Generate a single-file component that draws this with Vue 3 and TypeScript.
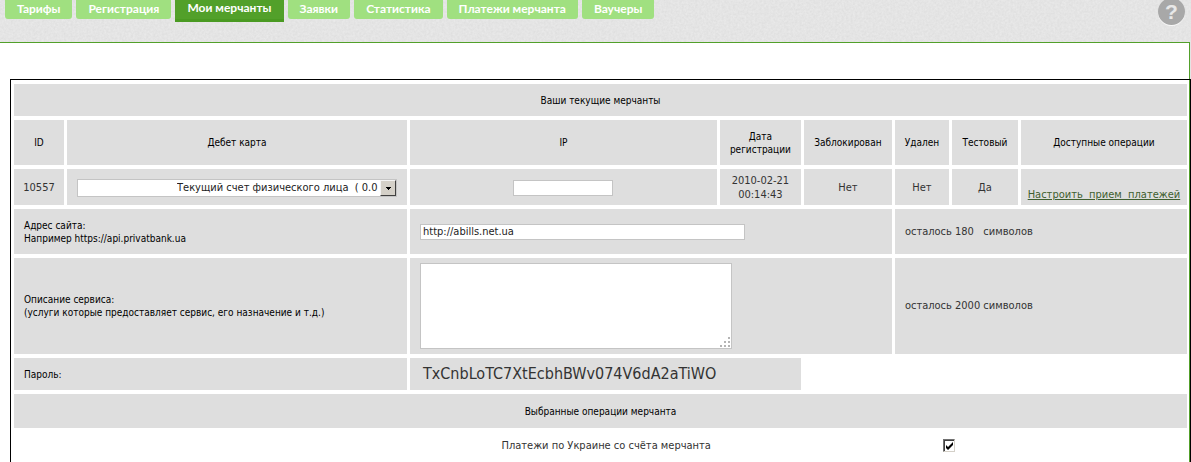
<script setup lang="ts">
import { ref } from 'vue'

interface Tab {
  label: string
  active?: boolean
}

const tabs: Tab[] = [
  { label: 'Тарифы' },
  { label: 'Регистрация' },
  { label: 'Мои мерчанты', active: true },
  { label: 'Заявки' },
  { label: 'Статистика' },
  { label: 'Платежи мерчанта' },
  { label: 'Ваучеры' },
]

const columns = ['ID', 'Дебет карта', 'IP', 'Дата регистрации', 'Заблокирован', 'Удален', 'Тестовый', 'Доступные операции']

const ip = ref('')
const site = ref('http://abills.net.ua')
const description = ref('')
const ukrainePayments = ref(true)
</script>

<template>
  <div class="page">
    <header class="top">
      <svg class="paper" aria-hidden="true">
        <filter id="grain" x="0" y="0" width="100%" height="100%" color-interpolation-filters="sRGB">
          <feTurbulence type="fractalNoise" baseFrequency="0.45" numOctaves="3" seed="4" />
          <feColorMatrix values="0.06 0 0 0 0.865  0.06 0 0 0 0.865  0.06 0 0 0 0.865  0 0 0 0 1" />
        </filter>
        <rect width="100%" height="100%" filter="url(#grain)" />
      </svg>
      <nav class="tabs">
        <a v-for="tab in tabs" :key="tab.label" href="#" class="tab" :class="{ active: tab.active }">{{ tab.label }}</a>
      </nav>
      <button type="button" class="help">?</button>
    </header>

    <main class="panel">
      <table class="merchants">
        <colgroup>
          <col class="c-id" />
          <col class="c-card" />
          <col class="c-ip" />
          <col class="c-date" />
          <col class="c-blocked" />
          <col class="c-deleted" />
          <col class="c-test" />
          <col class="c-ops" />
        </colgroup>
        <tbody>
          <tr class="row-title">
            <th colspan="8">Ваши текущие мерчанты</th>
          </tr>
          <tr class="row-head">
            <th v-for="name in columns" :key="name" scope="col">{{ name }}</th>
          </tr>
          <tr class="row-data">
            <td>10557</td>
            <td class="left">
              <div class="select-box">
                <select aria-label="Дебет карта">
                  <option>Текущий счет физического лица&nbsp; ( 0.0&nbsp; UAH )</option>
                </select>
                <span class="arrow" aria-hidden="true">
                  <svg width="5" height="3" viewBox="0 0 5 3"><path d="M0 0h5v1h-1v1h-1v1h-1v-1h-1v-1h-1z" fill="#000" /></svg>
                </span>
              </div>
            </td>
            <td><input v-model="ip" class="ip" type="text" aria-label="IP" /></td>
            <td>2010-02-21 00:14:43</td>
            <td>Нет</td>
            <td>Нет</td>
            <td>Да</td>
            <td class="ops"><a href="#">Настроить&nbsp; прием&nbsp; платежей</a></td>
          </tr>
          <tr class="row-site">
            <th colspan="2" class="left"><label for="site">Адрес сайта:<br />Например https://api.privatbank.ua</label></th>
            <td colspan="3" class="left"><input id="site" v-model="site" class="site" type="text" /></td>
            <td colspan="3" class="left">осталось 180 &nbsp; символов</td>
          </tr>
          <tr class="row-desc">
            <th colspan="2" class="left">
              <label for="desc">Описание сервиса:<br />(услуги которые предоставляет сервис, его назначение и т.д.)</label>
            </th>
            <td colspan="3" class="left">
              <div class="area-box">
                <textarea id="desc" v-model="description"></textarea>
                <svg class="grip" width="11" height="11" viewBox="0 0 11 11" fill="#b4b4b4" aria-hidden="true">
                  <path d="M9 0h2v2h-2zM9 4h2v2h-2zM5 4h2v2h-2zM9 8h2v2h-2zM5 8h2v2h-2zM1 8h2v2h-2z" />
                </svg>
              </div>
            </td>
            <td colspan="3" class="left">осталось 2000 символов</td>
          </tr>
          <tr class="row-pass">
            <th colspan="2" class="left">Пароль:</th>
            <td colspan="2" class="left password">TxCnbLoTC7XtEcbhBWv074V6dA2aTiWO</td>
          </tr>
          <tr class="row-ops">
            <th colspan="8">Выбранные операции мерчанта</th>
          </tr>
          <tr class="row-check">
            <td colspan="3" class="check-label"><label for="ukraine">Платежи по Украине со счёта мерчанта</label></td>
            <td colspan="5" class="check-cell"><input id="ukraine" v-model="ukrainePayments" type="checkbox" /></td>
          </tr>
        </tbody>
      </table>
    </main>
  </div>
</template>

<style>
body {
  margin: 0;
  background: #e4e4e4;
}
</style>

<style scoped>
.page {
  font-family: "DejaVu Sans Condensed", "DejaVu Sans", sans-serif;
  font-size: 11px;
  line-height: 14px;
  color: #333;
}

.top {
  position: relative;
  display: flex;
  justify-content: space-between;
  align-items: flex-start;
  height: 42px;
  padding: 0 6px 0 5px;
  overflow: hidden;
}

.paper {
  position: absolute;
  inset: 0;
  width: 100%;
  height: 100%;
}

.tabs {
  position: relative;
  display: flex;
  align-items: flex-start;
  gap: 4px;
}

.tab {
  box-sizing: border-box;
  height: 19px;
  padding: 0 12px;
  border-radius: 0 0 3px 3px;
  background: #a0e080;
  color: #fff;
  font-family: Lato, "Noto Sans", sans-serif;
  font-size: 12px;
  font-weight: 700;
  line-height: 18px;
  text-decoration: none;
  white-space: nowrap;
}

.tab.active {
  height: 22px;
  border-radius: 0;
  border-bottom: 3px solid #4a9a22;
  background: #52a02a;
  line-height: 16px;
}

.help {
  position: relative;
  width: 27px;
  height: 27px;
  margin: -2px 0 0;
  padding: 0;
  border: 0;
  border-radius: 50%;
  background: #a8a8a8;
  box-shadow: 0 1px 0 #f8f8f8;
  color: #e8e8e8;
  font-family: "Liberation Sans", Arial, sans-serif;
  font-size: 21px;
  font-weight: 700;
  line-height: 27px;
}

.panel {
  box-sizing: border-box;
  margin-right: 1px;
  padding-top: 36px;
  border-top: 1px solid #52a02a;
  border-right: 1px solid #52a02a;
  background: #fff;
}

.merchants {
  width: calc(100% - 8px);
  margin-left: 10px;
  border: 1px solid #000;
  border-bottom: 0;
  border-collapse: separate;
  border-spacing: 3px 4px;
  table-layout: fixed;
}

.c-id { width: 50px; }
.c-card { width: 340px; }
.c-date { width: 81px; }
.c-blocked { width: 88px; }
.c-deleted { width: 54px; }
.c-test { width: 66px; }
.c-ops { width: 166px; }

th,
td {
  padding: 0;
  background: #dedede;
  text-align: center;
  vertical-align: middle;
}

th {
  color: #000;
  font-size: 10px;
  font-weight: 400;
  line-height: 13px;
}

.left {
  padding-left: 10px;
  text-align: left;
}

.row-title { height: 32px; }
.row-head { height: 45px; }
.row-data { height: 36px; }
.row-site { height: 45px; }
.row-desc { height: 96px; }
.row-pass { height: 32px; }
.row-ops { height: 34px; }
.row-check { height: 27px; }

.row-data td {
  padding-top: 2px;
}

.select-box {
  position: relative;
  width: 320px;
  height: 18px;
}

select,
input[type="text"],
textarea {
  display: block;
  box-sizing: border-box;
  margin: 0;
  border: 1px solid #c4c4c4;
  border-radius: 0;
  outline: 0;
  background: #fff;
  color: #222;
  font-family: inherit;
  font-size: 11px;
}

select {
  width: 100%;
  height: 18px;
  padding: 0 16px 0 99px;
  appearance: none;
  line-height: 16px;
}

.arrow {
  position: absolute;
  top: 1px;
  right: 1px;
  display: flex;
  align-items: center;
  justify-content: center;
  box-sizing: border-box;
  width: 16px;
  height: 16px;
  border: 1px solid;
  border-color: #f4f4f4 #404040 #404040 #f4f4f4;
  background: #d4d0c8;
  pointer-events: none;
}

input[type="text"] {
  height: 16px;
  padding: 0 2px;
}

input.ip {
  width: 100px;
  margin: 0 auto;
}

input.site {
  width: 325px;
}

.row-data .ops {
  padding-top: 16px;
}

.ops a {
  color: #3f5f2f;
  white-space: nowrap;
}

.area-box {
  position: relative;
  width: 312px;
  height: 86px;
}

textarea {
  width: 100%;
  height: 100%;
  resize: none;
}

.grip {
  position: absolute;
  right: 2px;
  bottom: 1px;
}

.password {
  padding-left: 13px;
  font-size: 16px;
}

.row-check td {
  background: transparent;
}

.row-check .check-label {
  padding-right: 6px;
  text-align: right;
}

.row-check .check-cell {
  padding-right: 8px;
}

input[type="checkbox"] {
  display: block;
  box-sizing: border-box;
  width: 12px;
  height: 13px;
  margin: 0 auto;
  border: 1px solid;
  border-color: #707070 #d4d0c8 #d4d0c8 #707070;
  box-shadow: inset 1px 1px 0 #404040;
  background: #fff;
  appearance: none;
}

input[type="checkbox"]:checked {
  background: #fff url("data:image/svg+xml,%3Csvg xmlns='http://www.w3.org/2000/svg' viewBox='0 0 10 11'%3E%3Cpath d='M2 5v3l2 2 5-5V2L4 7z'/%3E%3C/svg%3E") center / 100% 100% no-repeat;
}
</style>
